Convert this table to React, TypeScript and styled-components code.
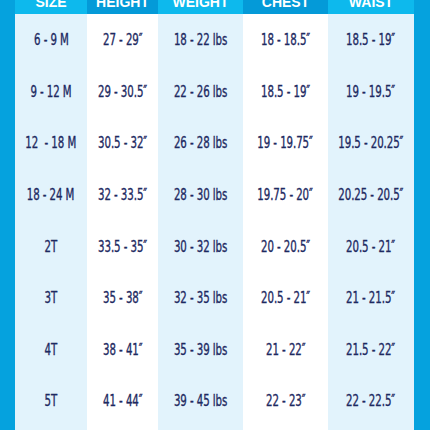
import React from "react";
import styled, { createGlobalStyle } from "styled-components";

const columns = ["SIZE", "HEIGHT", "WEIGHT", "CHEST", "WAIST"];
const widths = [72, 71, 85, 85, 86];

const rows: string[][] = [
  ["6 - 9 M", "27 - 29″", "18 - 22 lbs", "18 - 18.5″", "18.5 - 19″"],
  ["9 - 12 M", "29 - 30.5″", "22 - 26 lbs", "18.5 - 19″", "19 - 19.5″"],
  ["12  - 18 M", "30.5 - 32″", "26 - 28 lbs", "19 - 19.75″", "19.5 - 20.25″"],
  ["18 - 24 M", "32 - 33.5″", "28 - 30 lbs", "19.75 - 20″", "20.25 - 20.5″"],
  ["2T", "33.5 - 35″", "30 - 32 lbs", "20 - 20.5″", "20.5 - 21″"],
  ["3T", "35 - 38″", "32 - 35 lbs", "20.5 - 21″", "21 - 21.5″"],
  ["4T", "38 - 41″", "35 - 39 lbs", "21 - 22″", "21.5 - 22″"],
  ["5T", "41 - 44″", "39 - 45 lbs", "22 - 23″", "22 - 22.5″"],
  ["6T", "44 - 47″", "45 - 50 lbs", "23 - 24″", "22.5 - 23″"],
];

const GlobalStyle = createGlobalStyle`
  html, body {
    margin: 0;
    padding: 0;
    background: #05a2de;
  }
`;

const Frame = styled.div`
  width: 430px;
  height: 430px;
  overflow: hidden;
  box-sizing: border-box;
  padding: 0 16px 0 15px;
  background: #05a2de;
`;

const Table = styled.div`
  display: grid;
  grid-template-columns: ${widths.map((w) => `${w}px`).join(" ")};
  grid-template-rows: 14px;
  grid-auto-rows: 51.6px;
`;

const HeadCell = styled.div<{ $dark: boolean }>`
  height: 14px;
  overflow: hidden;
  display: flex;
  justify-content: center;
  background: ${(p) => (p.$dark ? "#049ad8" : "#0db9ed")};
  color: #ffffff;
  font-family: "Liberation Sans", Arial, sans-serif;
  font-weight: 700;
  font-size: 14px;
  line-height: 14px;
  span {
    margin-top: -5px;
  }
`;

const Cell = styled.div<{ $shade: boolean }>`
  display: flex;
  align-items: center;
  justify-content: center;
  background: ${(p) => (p.$shade ? "#e2f3fc" : "#ffffff")};
  color: #1d2961;
  font-family: "Liberation Sans Narrow", "DejaVu Sans Condensed", sans-serif;
  font-size: 16px;
  white-space: pre;
`;

const Value = styled.span`
  display: inline-block;
  transform: scaleX(0.71);
  letter-spacing: -0.1px;
  -webkit-text-stroke: 0.35px #1d2961;
`;

export default function App() {
  return (
    <>
      <GlobalStyle />
      <Frame>
        <Table>
          {columns.map((c, i) => (
            <HeadCell key={c} $dark={i % 2 === 1}>
              <span>{c}</span>
            </HeadCell>
          ))}
          {rows.map((r, ri) =>
            r.map((v, ci) => (
              <Cell key={`${ri}-${ci}`} $shade={ci % 2 === 0}>
                <Value>{v}</Value>
              </Cell>
            ))
          )}
        </Table>
      </Frame>
    </>
  );
}
